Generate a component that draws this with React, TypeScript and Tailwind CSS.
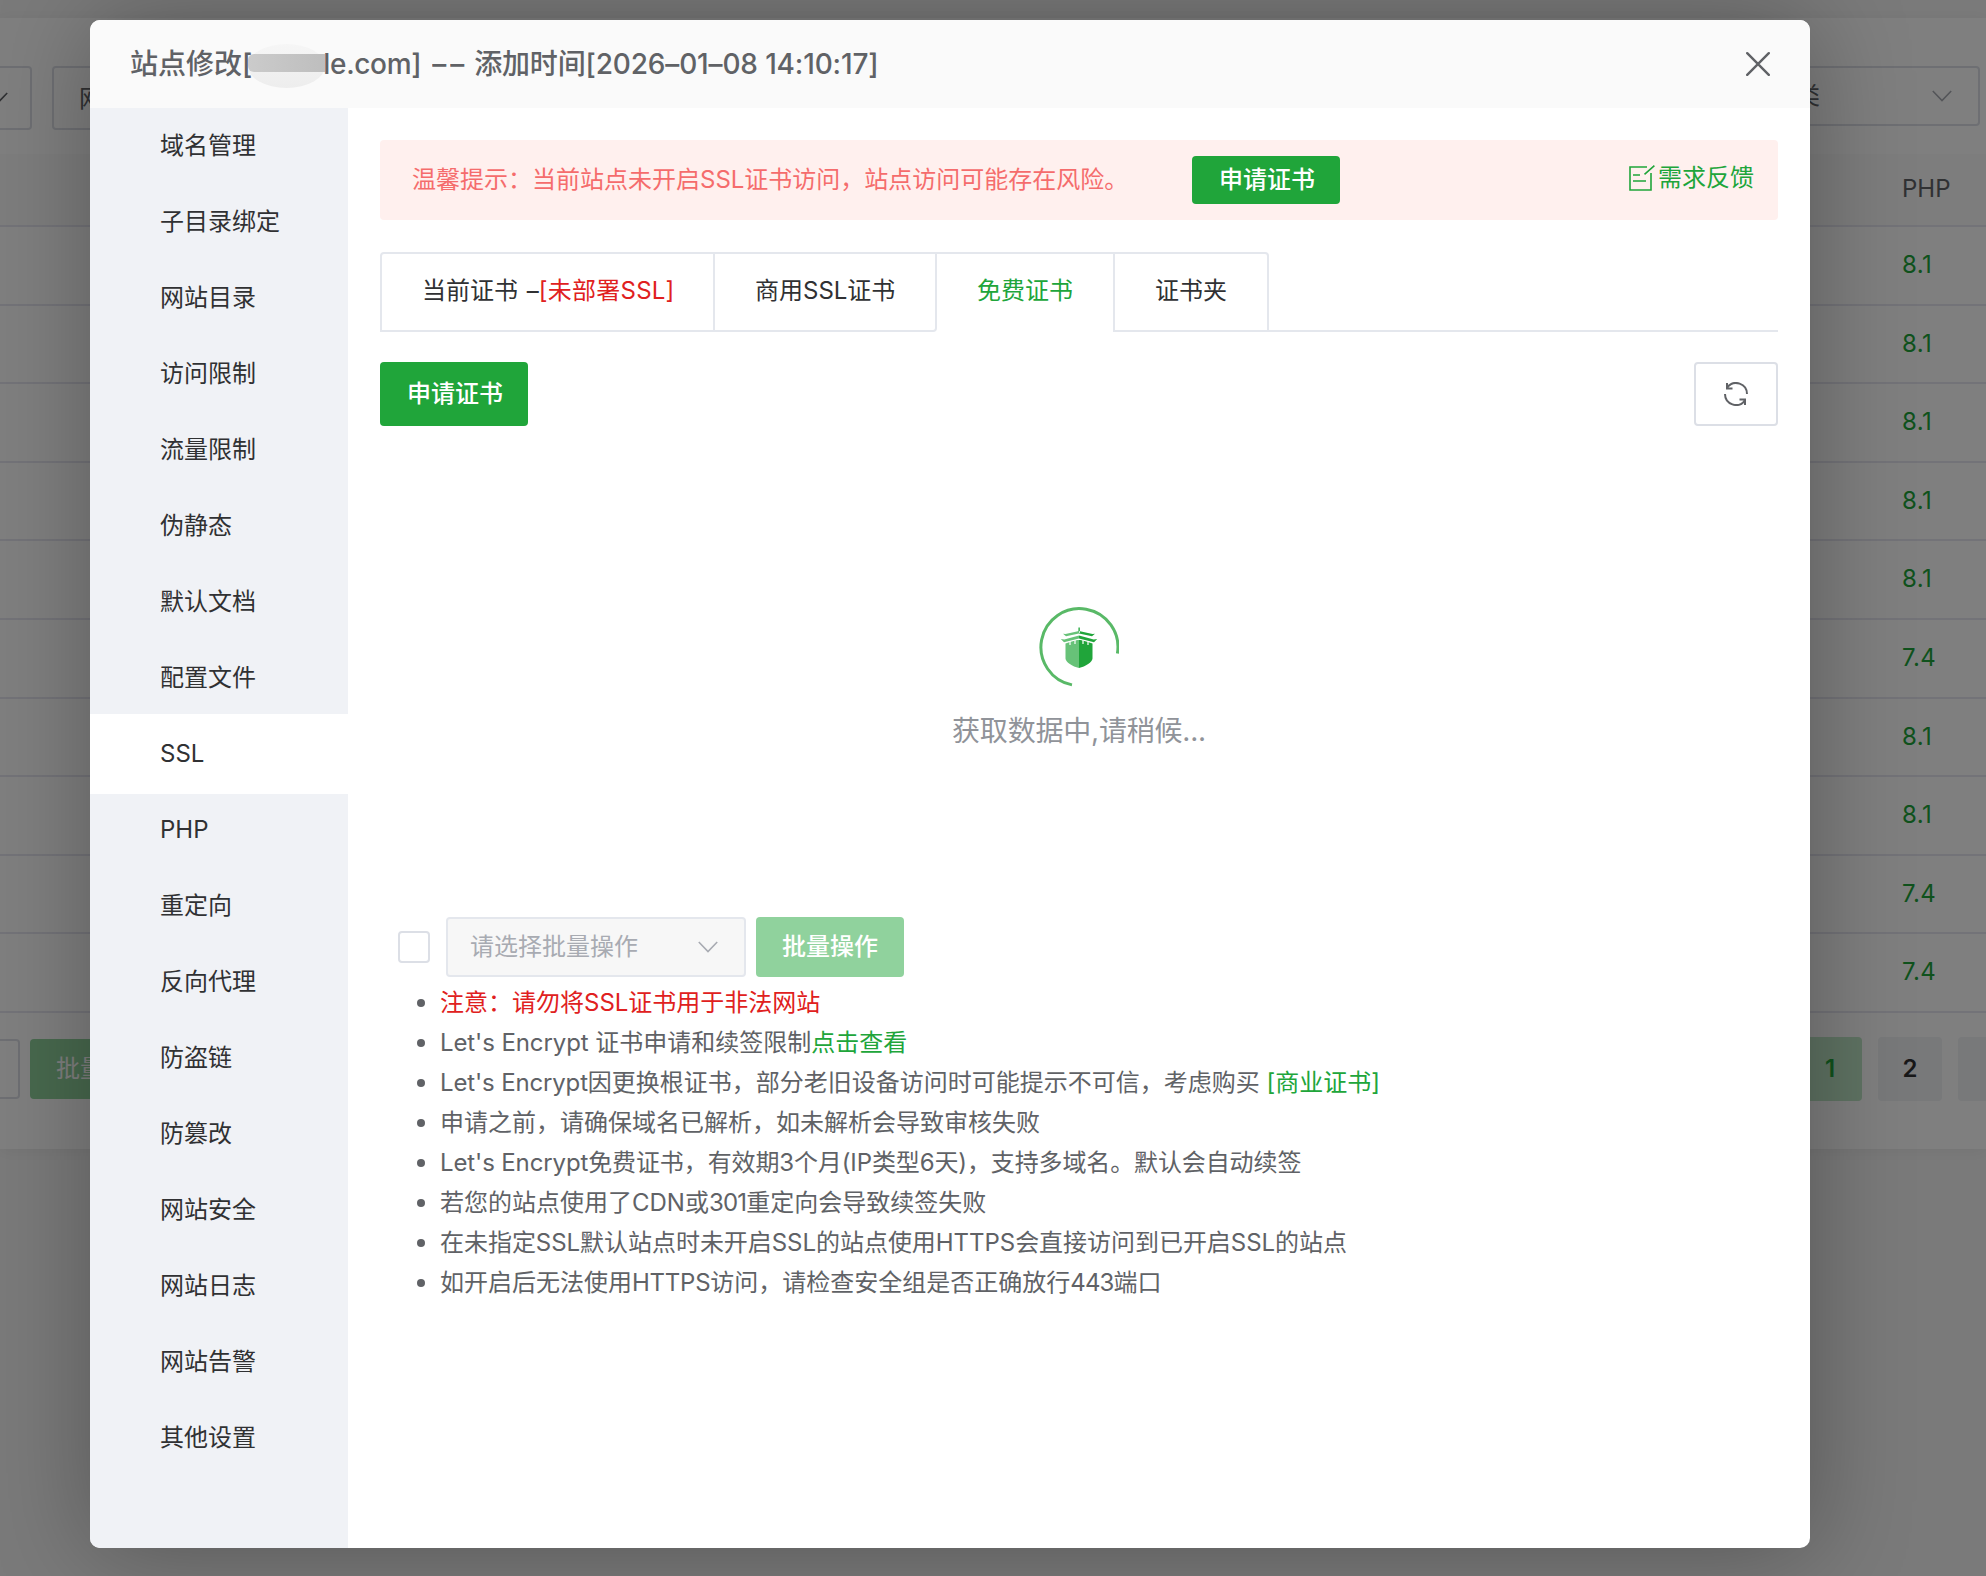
import { clsx } from "clsx";

const menus = [
  "域名管理",
  "子目录绑定",
  "网站目录",
  "访问限制",
  "流量限制",
  "伪静态",
  "默认文档",
  "配置文件",
  "SSL",
  "PHP",
  "重定向",
  "反向代理",
  "防盗链",
  "防篡改",
  "网站安全",
  "网站日志",
  "网站告警",
  "其他设置",
];

const phpVersions = ["8.1", "8.1", "8.1", "8.1", "8.1", "7.4", "8.1", "8.1", "7.4", "7.4"];

const ChevronDown = ({ className }: { className?: string }) => (
  <svg viewBox="0 0 20 12" fill="none" stroke="currentColor" strokeWidth="1.6" className={clsx("w-5 h-3", className)}>
    <path d="M0.8 1 10 10.6 19.2 1" />
  </svg>
);

const CloseIcon = () => (
  <svg viewBox="0 0 24 24" fill="none" stroke="currentColor" strokeWidth="2.4" strokeLinecap="round" className="w-6 h-6">
    <path d="M1.2 1.2 22.8 22.8M22.8 1.2 1.2 22.8" />
  </svg>
);

const FeedbackIcon = () => (
  <svg viewBox="0 0 26 26" fill="none" stroke="currentColor" strokeWidth="1.6" className="w-[26px] h-[26px]">
    <path d="M18 2H1v23h21V8M4 10h7M4 16h13M25.4.6 15.5 9.4" />
  </svg>
);

const RefreshIcon = () => (
  <svg viewBox="0 0 24 24" fill="none" stroke="currentColor" strokeWidth="2" className="w-6 h-6">
    <path d="M23 12A11 11 0 0 0 3.4 5.200M1 12a11 11 0 0 0 19.600 6.800M3 1v5.600h5.500M21 23v-5.600h-5.500" />
  </svg>
);

const Loading = () => (
  <div className="flex flex-col items-center">
    <svg viewBox="0 0 80 80" className="w-20 h-20">
      <path d="M78.400 46.500A38.500 38.500 0 1 0 33 77.900" fill="none" stroke="#59b967" strokeWidth="3" />
      <path d="M40 33c-3 0-7 1.500-13.500 3.500V51.500c0 3.500 7 8 13.500 9.500z" fill="#67c278" />
      <path d="M40 33c3 0 7 1.500 13.500 3.500V51.500c0 3.500-7 8-13.500 9.500z" fill="#20a53a" />
      <path d="M40 24v2.400L27 29.200 24 26.800 26.500 27zM39.200 20.500H40V26h-.8zM40 28.600v2.800L25 35.200 21.800 32l3.500.600z" fill="#67c278" />
      <path d="M40 24v2.400L53 29.200l3-2.400-2.500.200zM40 20.500h.8V26H40zM40 28.600v2.800l15 3.800L58.200 32l-3.500.6z" fill="#20a53a" />
      <path d="M31 34v4M36 33v4M44 33v4M49 34v4" stroke="#fff" strokeWidth="1.200" />
    </svg>
    <p className="mt-[24px] text-[28px] leading-10 tracking-[-0.2px] text-[#909399]">获取数据中,请稍候...</p>
  </div>
);

const SiteList = () => (
  <div className="w-[1986px] h-[1576px] overflow-hidden bg-[#f5f5f5] pt-[18px]">
    <div className="h-[1131px] bg-white shadow-[0_2px_16px_rgba(0,0,0,0.06)]">
      <div className="flex h-[136px] justify-between pt-12">
        <div className="flex gap-5">
          <div className="flex h-16 w-8 items-center justify-end rounded-r border-2 border-l-0 border-[#dcdfe6] pr-[22px] text-[#606266]">
            <ChevronDown className="shrink-0" />
          </div>
          <div className="h-16 w-[300px] rounded border-2 border-[#dcdfe6] pl-[25px] leading-[62px] text-[#606266]">
            网站名
          </div>
        </div>
        <div className="mr-[6px] flex h-[60px] w-[300px] items-center justify-between rounded border-2 border-[#dcdfe6] pl-[42px] pr-[26px] text-[#606266]">
          <span>全部分类</span>
          <ChevronDown className="text-[#a8abb2]" />
        </div>
      </div>
      <div className="h-[73px] border-b-2 border-[#e6e7f0] bg-[#fafafa] pl-[1902px] leading-[70px] text-[#606266]">
        PHP
      </div>
      {phpVersions.map((v, i) => (
        <div
          key={i}
          className="h-[78.6px] border-b-2 border-[#e6e7f0] pl-[1902px] leading-[76px] tracking-[0.4px] text-[#20a53a]"
        >
          {v}
        </div>
      ))}
      <div className="flex justify-between pt-6">
        <div className="flex gap-[10px] pt-[2px]">
          <div className="h-[60px] w-5 rounded-r border-2 border-l-0 border-[#dcdfe6]"></div>
          <div className="h-[60px] w-[148px] rounded bg-[#90d29d] text-center leading-[60px] text-white">批量操作</div>
        </div>
        <div className="flex w-[188px] gap-4 text-center font-semibold leading-[64px] text-[#303133]">
          <div className="size-16 shrink-0 rounded bg-[#bfe6c6] text-[#20a53a]">1</div>
          <div className="size-16 shrink-0 rounded bg-[#f0f2f5]">2</div>
          <div className="h-16 w-7 shrink-0 rounded-l bg-[#f0f2f5]"></div>
        </div>
      </div>
    </div>
  </div>
);

const Sidebar = () => (
  <div className="w-[258px] bg-[#f0f2f6]">
    {menus.map((name) => (
      <div
        key={name}
        className={clsx(
          "pl-[70px] text-[#303133]",
          name === "SSL" ? "-my-[2px] h-20 bg-white leading-[80px]" : "h-[76px] leading-[76px]"
        )}
      >
        {name}
      </div>
    ))}
  </div>
);

const Tabs = () => (
  <div className="mt-8 flex h-20 leading-[74px] text-[#303133]">
    <div className="w-[335px] rounded-tl border-2 border-[#e4e7ed] pl-10">
      当前证书 <span className="ml-[2px]">–</span>
      <span className="tracking-[0.25px] text-[#e02020]">[未部署SSL]</span>
    </div>
    <div className="w-[222px] rounded-br border-2 border-l-0 border-[#e4e7ed] pl-10">商用SSL证书</div>
    <div className="w-[176px] border-t-2 border-[#e4e7ed] pl-10 text-[#20a53a]">免费证书</div>
    <div className="w-[156px] rounded-tr border-2 border-[#e4e7ed] pl-10">证书夹</div>
    <div className="flex-1 border-b-2 border-[#e4e7ed]"></div>
  </div>
);

const Note = ({ children, className }: { children: React.ReactNode; className?: string }) => (
  <li className="flex h-10 items-center pl-[37px]">
    <span className="mr-[15px] size-2 rounded-full bg-[#606266]"></span>
    <p className={clsx("whitespace-pre", className)}>{children}</p>
  </li>
);

const Notes = () => (
  <ul className="list-none leading-10 text-[#606266]">
    <Note>
      <span className="text-[#e02020]">注意：请勿将SSL证书用于非法网站</span>
    </Note>
    <Note>
      <span className="tracking-[-0.1px]">Let's Encrypt </span>证书申请和续签限制
      <span className="text-[#20a53a]">点击查看</span>
    </Note>
    <Note>
      <span className="tracking-[-0.15px]">Let's Encrypt</span>因更换根证书，部分老旧设备访问时可能提示不可信，考虑购买{" "}
      <span className="text-[#20a53a]">[商业证书]</span>
    </Note>
    <Note>申请之前，请确保域名已解析，如未解析会导致审核失败</Note>
    <Note className="tracking-[-0.12px]">Let's Encrypt免费证书，有效期3个月(IP类型6天)，支持多域名。默认会自动续签</Note>
    <Note>
      若您的站点使用了CDN或<span className="tracking-[-0.8px]">301</span>重定向会导致续签失败
    </Note>
    <Note className="tracking-[-0.04px]">在未指定SSL默认站点时未开启SSL的站点使用HTTPS会直接访问到已开启SSL的站点</Note>
    <Note>
      如开启后无法使用<span className="tracking-[-0.25px]">HTTPS</span>访问，请检查安全组是否正确放行
      <span className="tracking-[-0.9px]">443</span>端口
    </Note>
  </ul>
);

const SiteDialog = () => (
  <div className="flex h-[1528px] w-[1720px] flex-col overflow-hidden rounded-[10px] bg-white shadow-[2px_2px_100px_rgba(0,0,0,0.3)]">
    <div className="flex h-[88px] items-center justify-between bg-[#fafafa] pl-10 pr-10 text-[#606266]">
      <div className="flex items-center whitespace-pre text-[28px] font-medium">
        <span>站点修改[</span>
        {/* masked part of the domain */}
        <span className="relative h-14 w-[71px]">
          <span className="absolute -left-1 top-2 h-11 w-[77px] rounded-[50%] bg-gradient-to-b from-[#f6f6f6] to-[#ededed]"></span>
          <span className="absolute -left-1 top-[18px] h-[18px] w-[77px] rounded-l-md bg-gradient-to-r from-[#cbcbcb] to-[#bebebe]"></span>
        </span>
        <span className="tracking-[-0.35px]">le.com]</span>
        <span className="ml-[11px] flex gap-[3px] pb-px">
          <span className="w-[15px] overflow-hidden">–</span>
          <span className="w-[15px] overflow-hidden">–</span>
        </span>
        <span className="ml-[9px] tracking-[-0.15px]">添加时间[2026–01–08 14:10:17]</span>
      </div>
      <CloseIcon />
    </div>
    <div className="flex flex-1">
      <Sidebar />
      <div className="flex-1 px-8 pt-8">
        <div className="flex h-20 items-center rounded bg-[#fff0ee] pl-8 pr-6">
          <p className="w-[780px] text-[#f56c6c]">温馨提示：当前站点未开启SSL证书访问，站点访问可能存在风险。</p>
          <button className="h-12 w-[148px] rounded bg-[#20a53a] pl-[2px] font-medium text-white">申请证书</button>
          <div className="ml-auto flex items-center gap-[3px] pb-1 text-[#20a53a]">
            <FeedbackIcon />
            <span>需求反馈</span>
          </div>
        </div>
        <Tabs />
        <div className="mt-[30px] flex justify-between">
          <button className="h-16 w-[148px] rounded bg-[#20a53a] pl-[2px] font-medium text-white">申请证书</button>
          <button className="flex h-16 w-[84px] items-center justify-center rounded border-2 border-[#dcdfe6] text-[#606266]">
            <RefreshIcon />
          </button>
        </div>
        <div className="h-[491px] pt-[181px]">
          <Loading />
        </div>
        <div className="flex items-center pl-[18px]">
          <span className="size-8 rounded border-2 border-[#dcdfe6]"></span>
          <div className="ml-4 flex h-[60px] w-[300px] items-center justify-between rounded border-2 border-[#e4e7ed] bg-[#f7f7f7] pl-[22px] pr-[26px] text-[#a8abb2]">
            <span>请选择批量操作</span>
            <ChevronDown />
          </div>
          <button className="ml-[10px] h-[60px] w-[148px] rounded bg-[#90d29d] font-medium text-white">批量操作</button>
        </div>
        <div className="pt-[6px]">
          <Notes />
        </div>
      </div>
    </div>
  </div>
);

export default function App() {
  return (
    <div className="relative h-[1576px] w-[1986px] overflow-hidden font-['Inter','Noto_Sans_CJK_SC',sans-serif] text-[24px]">
      <SiteList />
      <div className="absolute inset-0 bg-black/50 pl-[90px] pt-5">
        <SiteDialog />
      </div>
    </div>
  );
}
